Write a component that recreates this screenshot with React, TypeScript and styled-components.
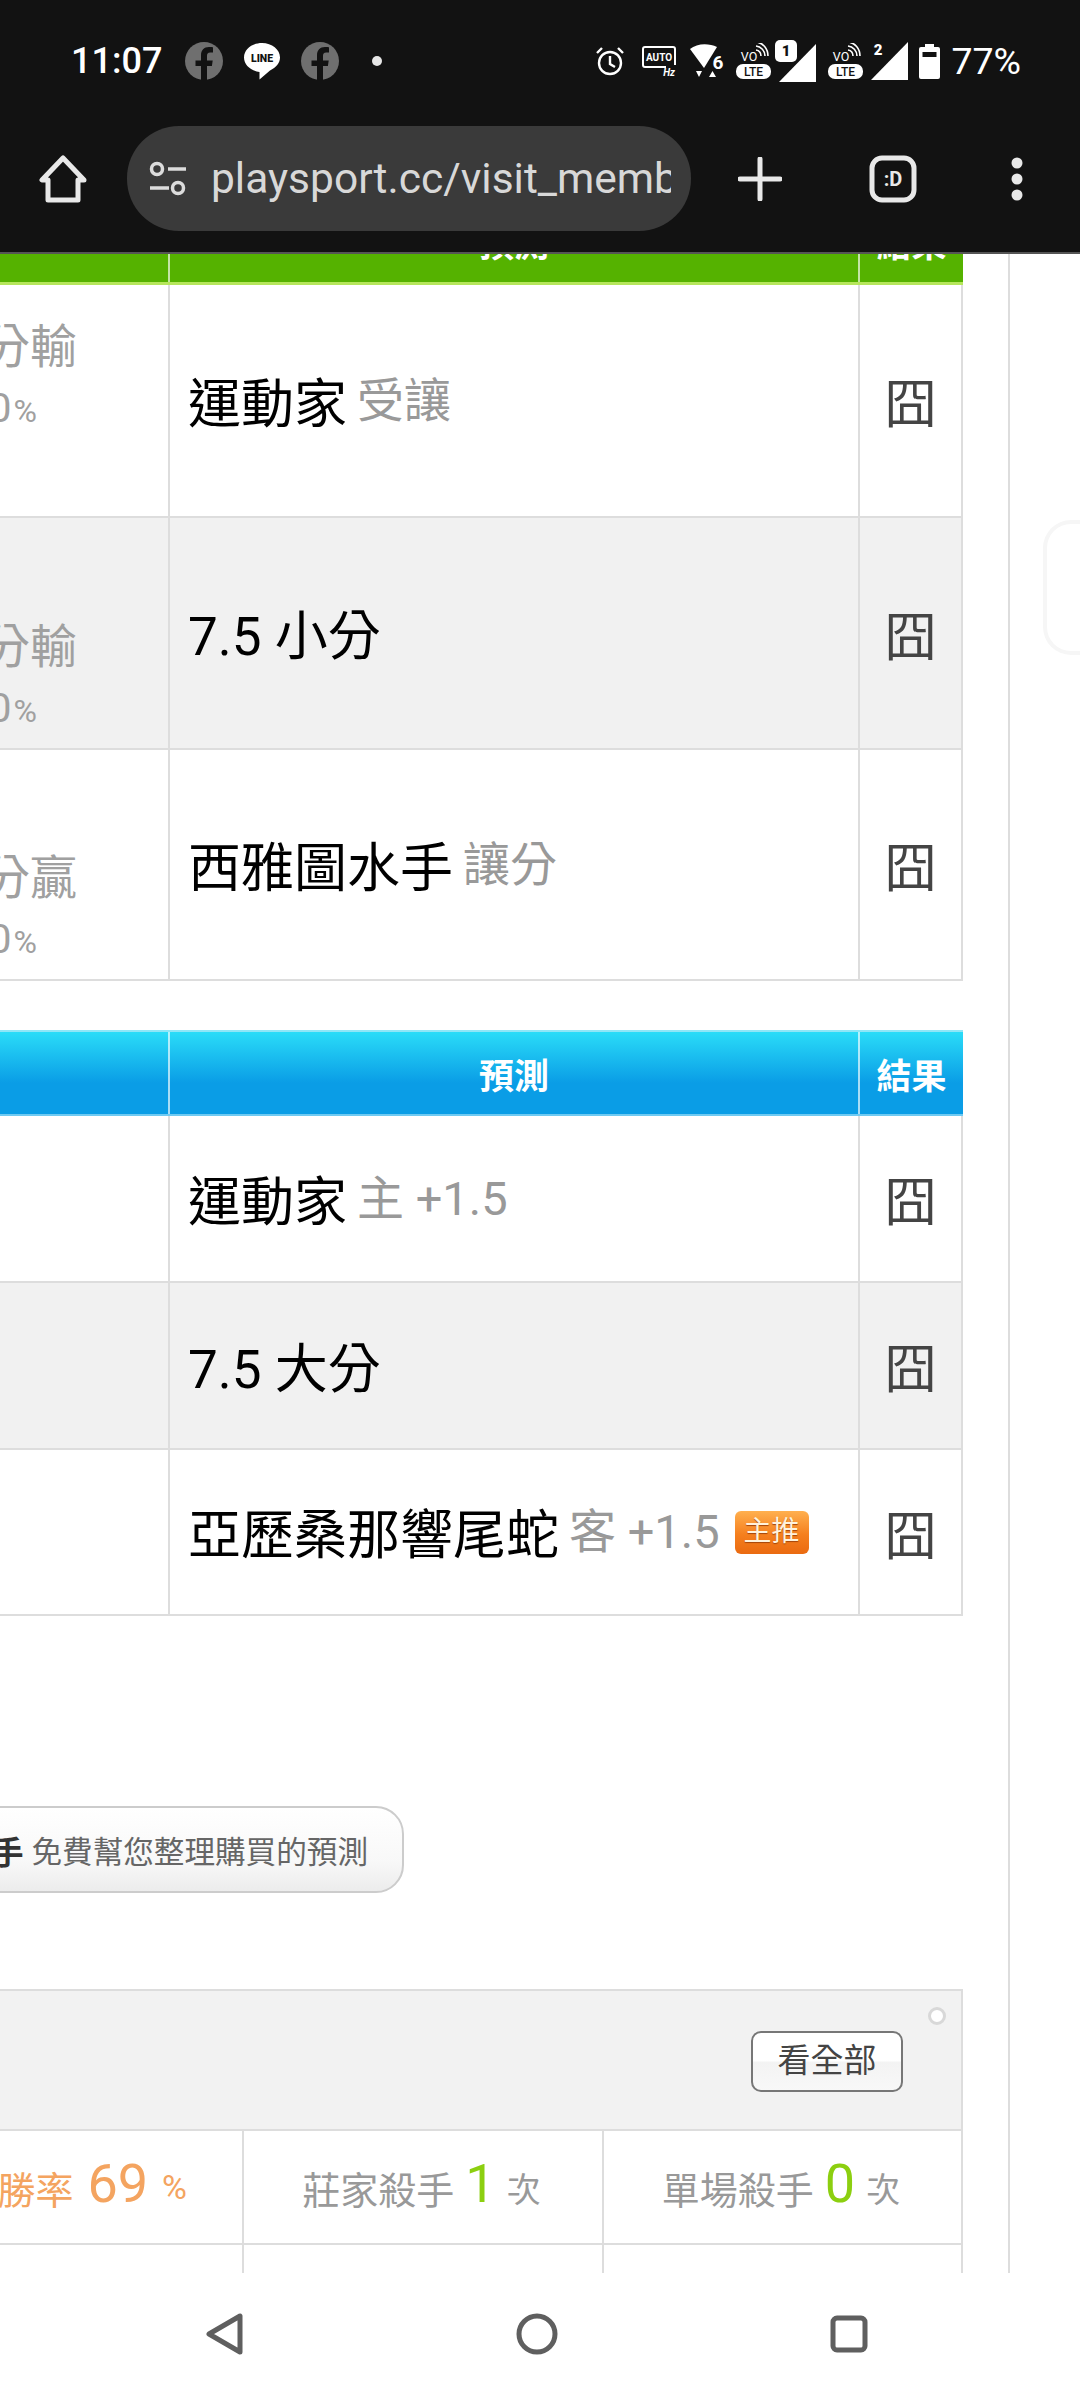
import React from 'react';
import styled, { createGlobalStyle } from 'styled-components';

const cjk = `Roboto, "Noto Sans CJK TC", sans-serif`;

const GlobalStyle = createGlobalStyle`
  html, body { margin: 0; padding: 0; background: #fff; }
  body { font-family: ${cjk}; }
  * { box-sizing: border-box; }
`;

const Page = styled.div`
  width: 1080px;
  height: 2400px;
  display: flex;
  flex-direction: column;
  overflow: hidden;
  background: #fff;
`;

/* ---------- browser chrome ---------- */
const Chrome = styled.header`
  height: 254px;
  flex-shrink: 0;
  background: #121212;
  border-bottom: 2px solid #555;
  position: relative;
  z-index: 2;
`;
const StatusBar = styled.div`
  height: 122px;
  padding: 0 59px 0 71px;
  display: flex;
  align-items: center;
  color: #fff;
`;
const Time = styled.span`
  font-size: 36px;
  font-weight: 500;
  width: 114px;
`;
const Notifs = styled.div`
  display: flex;
  align-items: center;
  gap: 21px;
`;
const Dot = styled.i`
  width: 10px;
  height: 10px;
  margin-left: 12px;
  border-radius: 50%;
  background: #e6e6e6;
`;
const Spacer = styled.div`
  flex: 1;
`;
const SysIcons = styled.div`
  display: flex;
  align-items: center;
  gap: 10px;
  svg:nth-child(1) {
    margin-right: 8px;
  }
  svg:nth-child(2) {
    margin-right: 4px;
  }
  svg:nth-child(3) {
    margin-right: 1px;
  }
  svg:nth-child(4) {
    margin-right: -7px;
  }
  svg:nth-child(5) {
    margin-right: 1px;
  }
  svg:nth-child(6) {
    margin-right: -3px;
  }
`;
const Battery = styled.span`
  font-size: 37.500px;
  margin-left: 1px;
`;
const Toolbar = styled.div`
  height: 130px;
  display: flex;
  align-items: flex-start;
  padding: 4px 0 0 38px;
`;
const IconSlot = styled.div<{ $w: number; $ml?: number }>`
  width: ${({ $w }) => $w}px;
  margin-left: ${({ $ml }) => $ml ?? 0}px;
  height: 105px;
  flex-shrink: 0;
  display: flex;
  align-items: center;
  justify-content: center;
`;
const UrlPill = styled.div`
  width: 564px;
  height: 105px;
  margin-left: 39px;
  border-radius: 52px;
  background: #3a3a3a;
  display: flex;
  align-items: center;
  padding: 0 20px 0 21px;
  overflow: hidden;
  flex-shrink: 0;
`;
const UrlText = styled.span`
  font-size: 42.500px;
  color: #d8d8d8;
  margin-left: 23px;
  white-space: nowrap;
  overflow: hidden;
  flex: 1;
  line-height: 60px;
`;

/* ---------- scrolled page ---------- */
const Viewport = styled.div`
  flex: 1;
  min-height: 0;
  display: flex;
  overflow: hidden;
`;
const Main = styled.main`
  width: 1010px;
  flex-shrink: 0;
  padding-right: 45px;
  border-right: 2px solid #ddd;
  overflow: hidden;
`;
const Side = styled.aside`
  flex: 1;
  padding: 266px 0 0 33px;
  overflow: hidden;
`;
const GhostCard = styled.div`
  width: 60px;
  height: 135px;
  border: 4px solid #f6f6f6;
  border-right: 0;
  border-radius: 28px 0 0 28px;
`;
const Content = styled.div`
  margin-top: -55px;
`;

const columns = `168px 690px 1fr`;

const HeadRow = styled.div<{ $kind: 'green' | 'blue' }>`
  display: grid;
  grid-template-columns: ${columns};
  height: 86px;
  color: #fff;
  font-size: 35px;
  font-weight: 700;
  text-align: center;
  ${({ $kind }) =>
    $kind === 'green'
      ? `background: #55b200; border-bottom: 3px solid #b6e65c; padding-top: 2px;`
      : `background: linear-gradient(#2adcf8 0%, #0a9de6 62%, #0a9de6 100%); border-top: 2px solid #8fe6f7; border-bottom: 2px solid #6fcaf2;`}
`;
const HeadCell = styled.div`
  display: flex;
  align-items: center;
  justify-content: center;
  white-space: nowrap;
  & + & {
    border-left: 2px solid rgba(255, 255, 255, 0.65);
  }
`;
const TableBody = styled.div`
  border-right: 2px solid #ddd;
  border-bottom: 2px solid #ddd;
`;
const Row = styled.div<{ $h: number; $alt?: boolean }>`
  display: grid;
  grid-template-columns: ${columns};
  height: ${({ $h }) => $h}px;
  background: ${({ $alt }) => ($alt ? '#f1f1f1' : '#fff')};
  & + & {
    border-top: 2px solid #ddd;
  }
`;
const SideCell = styled.div<{ $shift?: number }>`
  display: flex;
  flex-direction: column;
  align-items: flex-end;
  justify-content: center;
  padding-right: 92px;
  overflow: hidden;
  color: #a0a0a0;
  margin-top: ${({ $shift }) => $shift ?? 0}px;
  white-space: nowrap;
`;
const Outcome = styled.span`
  font-size: 47px;
  line-height: 62px;
  margin-right: -1px;
`;
const Percent = styled.span`
  font-size: 41px;
  line-height: 60px;
  margin-right: 39px;
  small {
    font-size: 32px;
    margin-left: 2px;
  }
`;
const PickCell = styled.div`
  border-left: 2px solid #ddd;
  padding: 8px 0 0 18px;
  display: flex;
  align-items: center;
  white-space: nowrap;
`;
const Team = styled.span`
  font-size: 53px;
  color: #000;
  line-height: 70px;
`;
const Handicap = styled.span`
  font-size: 47px;
  color: #999;
  margin-left: 10px;
  line-height: 70px;
  position: relative;
  top: -4px;
`;
const MainBadge = styled.span`
  width: 74px;
  height: 43px;
  margin-left: 15px;
  border-radius: 6px;
  background: linear-gradient(#ffb04f 0%, #f57f1e 55%, #ea6a10 100%);
  color: #fff2dc;
  font-size: 28px;
  line-height: 42px;
  text-align: center;
  text-shadow: 0 1px 1px #a3450a;
  position: relative;
  top: -4px;
`;
const ResultCell = styled.div`
  border-left: 2px solid #ddd;
  display: flex;
  align-items: center;
  justify-content: center;
  font-size: 52px;
  color: #444;
`;
const SecondTable = styled.section`
  margin-top: 49px;
`;

/* ---------- helper pill ---------- */
const HelperWrap = styled.div`
  margin-top: 190px;
  width: 404px;
  display: flex;
  justify-content: flex-end;
  overflow: hidden;
`;
const Helper = styled.div`
  height: 87px;
  flex-shrink: 0;
  padding: 0 34px 0 20px;
  border: 2px solid #ccc;
  border-radius: 28px;
  background: linear-gradient(#fff 0%, #f8f8f8 65%, #ececec 100%);
  display: flex;
  align-items: center;
  gap: 10px;
  white-space: nowrap;
  strong {
    font-size: 32px;
    color: #333;
    position: relative;
    left: 2px;
  }
  span {
    font-size: 30.600px;
    color: #666;
  }
`;

/* ---------- stats panel ---------- */
const Panel = styled.section`
  margin-top: 96px;
  border-top: 2px solid #ddd;
  border-right: 2px solid #ddd;
`;
const PanelHead = styled.div`
  height: 140px;
  background: #f2f2f2;
  border-bottom: 2px solid #ddd;
  display: flex;
  justify-content: flex-end;
  padding: 40px 58px 0 0;
  position: relative;
`;
const ViewAll = styled.button`
  width: 152px;
  height: 61px;
  padding: 0 0 7px;
  border: 2px solid #777;
  border-radius: 10px;
  background: linear-gradient(#fff 0%, #fff 48%, #f3f3f3 52%, #f8f8f8 100%);
  color: #444;
  font-family: ${cjk};
  font-size: 33px;
`;
const Ring = styled.i`
  position: absolute;
  right: 15px;
  top: 16px;
  width: 18px;
  height: 18px;
  border: 3px solid #d8d8d8;
  border-radius: 50%;
  background: #fff;
`;
const StatRow = styled.div<{ $h: number }>`
  display: grid;
  grid-template-columns: 242px 360px 1fr;
  height: ${({ $h }) => $h}px;
  & + & {
    border-top: 2px solid #ddd;
  }
`;
const StatCell = styled.div<{ $first?: boolean }>`
  display: flex;
  align-items: center;
  justify-content: ${({ $first }) => ($first ? 'flex-end' : 'center')};
  padding-right: ${({ $first }) => ($first ? '55px' : '3px')};
  overflow: hidden;
  white-space: nowrap;
  color: #999;
  font-size: 38px;
  ${({ $first }) => ($first ? 'color: #f4a460;' : 'border-left: 2px solid #ddd;')}
`;
const StatNum = styled.span<{ $orange?: boolean }>`
  font-size: 54px;
  margin: 0 ${({ $orange }) => ($orange ? 14 : 11)}px;
  color: ${({ $orange }) => ($orange ? '#f4a460' : '#8ccf10')};
  position: relative;
  top: -4px;
`;
const StatUnit = styled.span`
  font-size: 34px;
`;

/* ---------- android nav ---------- */
const NavBar = styled.nav`
  height: 127px;
  flex-shrink: 0;
  background: #fff;
  display: flex;
  justify-content: center;
  align-items: center;
  padding: 0 6px 5px 0;
`;
const NavItem = styled.div`
  width: 312px;
  display: flex;
  justify-content: center;
`;

const FbIcon = () => (
  <svg width="38" height="38" viewBox="0 0 38 38">
    <circle cx="19" cy="19" r="19" fill="#6f6f6f" />
    <path d="M16 38V24h-5.500v-5.500H16v-5c0-5.500 3-8.500 8-8.500 2 0 3.500.2 4 .3v5.200h-2.800c-2.500 0-3.200 1.300-3.200 3.200v4.800h5.700l-.8 5.500H22v14z" fill="#121212" />
  </svg>
);
const LineIcon = () => (
  <svg width="36" height="38" viewBox="0 0 36 38">
    <path d="M18 1C8 1 0 7.500 0 15.500 0 23 6.500 28.500 15.500 30v7.500L26 28.500c6-3 10-7.500 10-13C36 7.500 28 1 18 1z" fill="#fff" />
    <text x="18" y="20" textAnchor="middle" fontFamily="Roboto" fontSize="10.500" fontWeight="900" fill="#121212">LINE</text>
  </svg>
);
const AlarmIcon = () => (
  <svg width="28" height="30" viewBox="0 0 28 30" fill="none" stroke="#fff" strokeWidth="2.400">
    <circle cx="14" cy="17" r="11" />
    <path d="M14 10v8l5 3M1 7l5-5M27 7l-5-5" />
  </svg>
);
const AutoHzIcon = () => (
  <svg width="34" height="32" viewBox="0 0 34 32">
    <path d="M24 22H3a2 2 0 0 1-2-2V4a2 2 0 0 1 2-2h28a2 2 0 0 1 2 2v16" fill="none" stroke="#fff" strokeWidth="2" />
    <text x="17" y="16" textAnchor="middle" fontFamily="Roboto" fontSize="10" fontWeight="700" fill="#fff">AUTO</text>
    <text x="33" y="31" textAnchor="end" fontFamily="Roboto" fontSize="10" fontStyle="italic" fontWeight="700" fill="#fff">Hz</text>
  </svg>
);
const WifiIcon = () => (
  <svg width="35" height="34" viewBox="0 0 35 34">
    <path d="M0 5C7-1 19-1 27 3L14 24z" fill="#fff" />
    <path d="M6 27h6l-3 6zM19 33h7l-3.500-6z" fill="#fff" />
    <text x="28" y="25" textAnchor="middle" fontFamily="Roboto" fontSize="19" fontWeight="700" fill="#fff">6</text>
  </svg>
);
const VolteIcon = () => (
  <svg width="36" height="36" viewBox="0 0 36 36">
    <text x="13" y="18" textAnchor="middle" fontFamily="Roboto" fontSize="12.500" fill="#fff">VO</text>
    <path d="M20 7c3 .5 5 3 5 6M20 3c5 .5 9 5 9 10M20-1c7 .5 12 7 12 14" fill="none" stroke="#fff" strokeWidth="1.600" />
    <rect x="0" y="21" width="35" height="15" rx="7" fill="#fff" />
    <text x="17.500" y="33" textAnchor="middle" fontFamily="Roboto" fontSize="12" fontWeight="500" fill="#121212">LTE</text>
  </svg>
);
const SignalOne = () => (
  <svg width="42" height="42" viewBox="0 0 42 42">
    <path d="M41 4v38H4z" fill="#fff" />
    <rect x="0" y="0" width="22" height="22" rx="5" fill="#fff" />
    <text x="11" y="16" textAnchor="middle" fontFamily="Roboto" fontSize="15" fontWeight="900" fill="#121212">1</text>
  </svg>
);
const SignalTwo = () => (
  <svg width="38" height="38" viewBox="0 0 38 38">
    <path d="M37 0v38H0z" fill="#fff" />
    <text x="7" y="13" textAnchor="middle" fontFamily="Roboto" fontSize="15" fontWeight="900" fill="#fff">2</text>
  </svg>
);
const BatteryIcon = () => (
  <svg width="21" height="35" viewBox="0 0 21 35">
    <path d="M6 0h9v3h4a2 2 0 0 1 2 2v28a2 2 0 0 1-2 2H2a2 2 0 0 1-2-2V5a2 2 0 0 1 2-2h4z" fill="#fff" />
    <rect x="3.500" y="8" width="14" height="5" fill="#121212" />
  </svg>
);
const HomeIcon = () => (
  <svg width="48" height="50" viewBox="0 0 48 50" fill="none" stroke="#e8e8e8" strokeWidth="5" strokeLinejoin="round">
    <path d="M24 4 3 26h6v20h30V26h6z" />
  </svg>
);
const SiteIcon = () => (
  <svg width="40" height="40" viewBox="0 0 40 40" fill="none" stroke="#dcdcdc" strokeWidth="3.500">
    <circle cx="9" cy="10" r="5.500" />
    <circle cx="30" cy="29" r="5.500" />
    <path d="M20 10h18M2 29h19" />
  </svg>
);
const PlusIcon = () => (
  <svg width="44" height="44" viewBox="0 0 44 44" stroke="#e8e8e8" strokeWidth="5" strokeLinecap="round">
    <path d="M22 2v40M2 22h40" />
  </svg>
);
const TabIcon = () => (
  <svg width="48" height="48" viewBox="0 0 48 48">
    <rect x="3" y="3" width="42" height="42" rx="10" fill="none" stroke="#e8e8e8" strokeWidth="5" />
    <text x="24" y="31" textAnchor="middle" fontFamily="Roboto" fontSize="20" fontWeight="700" fill="#e8e8e8">:D</text>
  </svg>
);
const MoreIcon = () => (
  <svg width="12" height="44" viewBox="0 0 12 44" fill="#e8e8e8">
    <circle cx="6" cy="6" r="5.500" />
    <circle cx="6" cy="22" r="5.500" />
    <circle cx="6" cy="38" r="5.500" />
  </svg>
);
const BackIcon = () => (
  <svg width="38" height="42" viewBox="0 0 38 42" fill="none" stroke="#5f5f5f" strokeWidth="5" strokeLinejoin="round">
    <path d="M34 3v36L3 21z" />
  </svg>
);
const HomeNavIcon = () => (
  <svg width="42" height="42" viewBox="0 0 42 42" fill="none" stroke="#5f5f5f" strokeWidth="5">
    <circle cx="21" cy="21" r="18" />
  </svg>
);
const RecentIcon = () => (
  <svg width="38" height="38" viewBox="0 0 38 38" fill="none" stroke="#5f5f5f" strokeWidth="5">
    <rect x="3" y="3" width="32" height="32" rx="4" />
  </svg>
);

const firstTable = [
  { outcome: '分輸', shift: -44, team: '運動家', note: '受讓', h: 231 },
  { outcome: '分輸', shift: 90, team: '7.5 小分', note: '', h: 232, alt: true },
  { outcome: '分贏', shift: 90, team: '西雅圖水手', note: '讓分', h: 231 },
];
const secondTable = [
  { team: '運動家', note: '主 +1.5', h: 165 },
  { team: '7.5 大分', note: '', h: 167, alt: true },
  { team: '亞歷桑那響尾蛇', note: '客 +1.5', h: 166, star: true },
];

const App = () => {
  return (
    <Page>
      <GlobalStyle />
      <Chrome>
        <StatusBar>
          <Time>11:07</Time>
          <Notifs>
            <FbIcon />
            <LineIcon />
            <FbIcon />
            <Dot />
          </Notifs>
          <Spacer />
          <SysIcons>
            <AlarmIcon />
            <AutoHzIcon />
            <WifiIcon />
            <VolteIcon />
            <SignalOne />
            <VolteIcon />
            <SignalTwo />
            <BatteryIcon />
            <Battery>77%</Battery>
          </SysIcons>
        </StatusBar>
        <Toolbar>
          <IconSlot $w={50}>
            <HomeIcon />
          </IconSlot>
          <UrlPill>
            <SiteIcon />
            <UrlText>playsport.cc/visit_memb</UrlText>
          </UrlPill>
          <IconSlot $w={44} $ml={47}>
            <PlusIcon />
          </IconSlot>
          <IconSlot $w={48} $ml={87}>
            <TabIcon />
          </IconSlot>
          <IconSlot $w={12} $ml={94}>
            <MoreIcon />
          </IconSlot>
        </Toolbar>
      </Chrome>

      <Viewport>
        <Main>
          <Content>
            <section>
              <HeadRow $kind="green">
                <HeadCell />
                <HeadCell>預測</HeadCell>
                <HeadCell>結果</HeadCell>
              </HeadRow>
              <TableBody>
                {firstTable.map((r) => (
                  <Row key={r.team} $h={r.h} $alt={r.alt}>
                    <SideCell $shift={r.shift}>
                      <Outcome>{r.outcome}</Outcome>
                      <Percent>
                        0<small>%</small>
                      </Percent>
                    </SideCell>
                    <PickCell>
                      <Team>{r.team}</Team>
                      {r.note && <Handicap>{r.note}</Handicap>}
                    </PickCell>
                    <ResultCell>囧</ResultCell>
                  </Row>
                ))}
              </TableBody>
            </section>

            <SecondTable>
              <HeadRow $kind="blue">
                <HeadCell />
                <HeadCell>預測</HeadCell>
                <HeadCell>結果</HeadCell>
              </HeadRow>
              <TableBody>
                {secondTable.map((r) => (
                  <Row key={r.team} $h={r.h} $alt={r.alt}>
                    <SideCell />
                    <PickCell>
                      <Team>{r.team}</Team>
                      {r.note && <Handicap>{r.note}</Handicap>}
                      {r.star && <MainBadge>主推</MainBadge>}
                    </PickCell>
                    <ResultCell>囧</ResultCell>
                  </Row>
                ))}
              </TableBody>
            </SecondTable>

            <HelperWrap>
              <Helper>
                <strong>手</strong>
                <span>免費幫您整理購買的預測</span>
              </Helper>
            </HelperWrap>

            <Panel>
              <PanelHead>
                <ViewAll>看全部</ViewAll>
                <Ring />
              </PanelHead>
              <StatRow $h={112}>
                <StatCell $first>
                  勝率<StatNum $orange>69</StatNum>
                  <StatUnit>%</StatUnit>
                </StatCell>
                <StatCell>
                  莊家殺手<StatNum>1</StatNum>
                  <StatUnit>次</StatUnit>
                </StatCell>
                <StatCell>
                  單場殺手<StatNum>0</StatNum>
                  <StatUnit>次</StatUnit>
                </StatCell>
              </StatRow>
              <StatRow $h={112}>
                <StatCell $first />
                <StatCell />
                <StatCell />
              </StatRow>
            </Panel>
          </Content>
        </Main>
        <Side>
          <GhostCard />
        </Side>
      </Viewport>

      <NavBar>
        <NavItem>
          <BackIcon />
        </NavItem>
        <NavItem>
          <HomeNavIcon />
        </NavItem>
        <NavItem>
          <RecentIcon />
        </NavItem>
      </NavBar>
    </Page>
  );
};

export default App;
